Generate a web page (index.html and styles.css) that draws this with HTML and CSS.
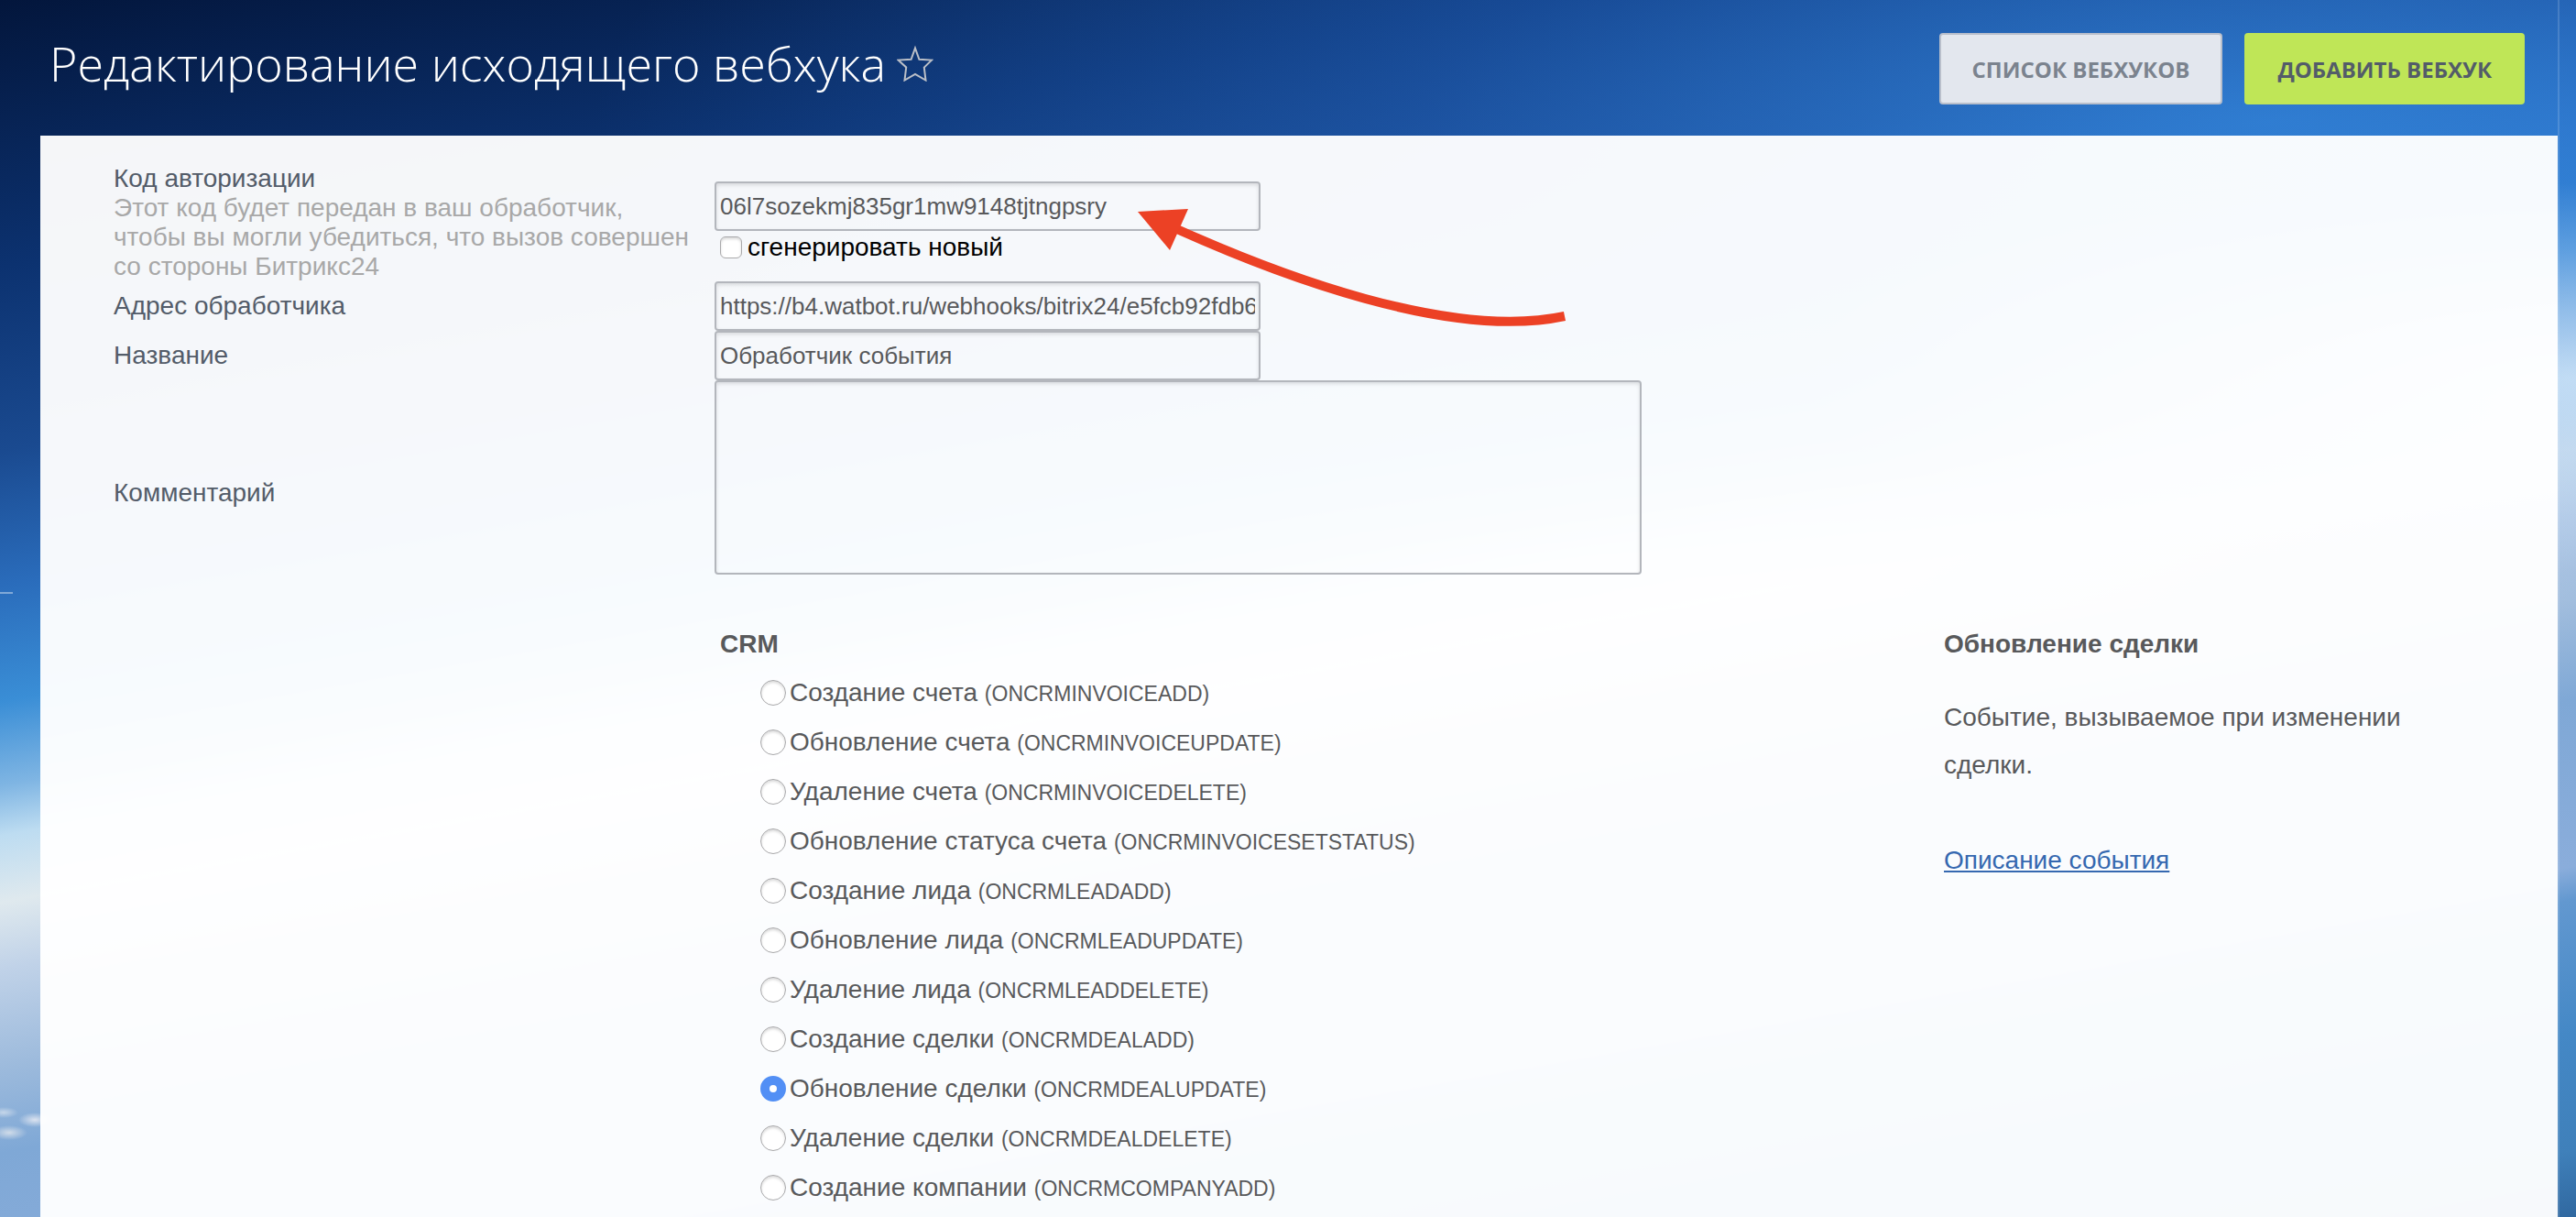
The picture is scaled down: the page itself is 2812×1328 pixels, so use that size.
FILE: index.html
```html
<!DOCTYPE html>
<html lang="ru">
<head>
<meta charset="utf-8">
<title>Редактирование исходящего вебхука</title>
<link rel="stylesheet" href="styles.css">
</head>
<body>
<span class="menu-mark"></span>
<div class="page">
  <header class="header">
    <div class="heading">
      <h1 class="title">Редактирование исходящего вебхука</h1>
      <button class="star" type="button" aria-label="Добавить в избранное">
        <svg viewBox="0 0 40 40" width="40" height="40"><path d="M20 3.500 L24.400 15.800 L38 16.600 L29.800 24.500 L31.500 38.500 L20 31.800 L8.500 38.500 L10.200 24.500 L1.500 16.600 L15.600 15.800 Z" fill="none" stroke="#bcc0c8" stroke-width="2"/></svg>
      </button>
    </div>
    <div class="actions">
      <button class="btn btn-light" type="button">СПИСОК ВЕБХУКОВ</button>
      <button class="btn btn-green" type="button">ДОБАВИТЬ ВЕБХУК</button>
    </div>
  </header>
  <main class="panel">
    <form>
      <div class="row">
        <div class="label"><label for="code">Код авторизации</label><p class="hint">Этот код будет передан в ваш обработчик,<br>чтобы вы могли убедиться, что вызов совершен<br>со стороны Битрикс24</p></div>
        <div class="control">
          <div class="code-field">
            <input class="field" id="code" type="text" value="06l7sozekmj835gr1mw9148tjtngpsry">
            <svg class="arrow" viewBox="0 0 480 140" width="480" height="140" aria-hidden="true">
              <path d="M38 22 L45 25 C150 72 340 146 466 119" fill="none" stroke="#ec4125" stroke-width="10"/>
              <path d="M0 5 L55 2 L35 47 Z" fill="#ec4125"/>
            </svg>
          </div>
          <label class="generate"><input class="check" type="checkbox">сгенерировать новый</label>
        </div>
      </div>
      <div class="row">
        <label class="label" for="url">Адрес обработчика</label>
        <input class="field" id="url" type="text" value="https://b4.watbot.ru/webhooks/bitrix24/e5fcb92fdb6">
      </div>
      <div class="row">
        <label class="label" for="name">Название</label>
        <input class="field" id="name" type="text" value="Обработчик события">
      </div>
      <div class="row">
        <label class="label" for="comment">Комментарий</label>
        <textarea class="field comment" id="comment"></textarea>
      </div>
      <div class="events">
        <fieldset class="list">
          <legend>CRM</legend>
          <label class="event"><input class="radio" type="radio" name="event"><span>Создание счета <small>(ONCRMINVOICEADD)</small></span></label>
          <label class="event"><input class="radio" type="radio" name="event"><span>Обновление счета <small>(ONCRMINVOICEUPDATE)</small></span></label>
          <label class="event"><input class="radio" type="radio" name="event"><span>Удаление счета <small>(ONCRMINVOICEDELETE)</small></span></label>
          <label class="event"><input class="radio" type="radio" name="event"><span>Обновление статуса счета <small>(ONCRMINVOICESETSTATUS)</small></span></label>
          <label class="event"><input class="radio" type="radio" name="event"><span>Создание лида <small>(ONCRMLEADADD)</small></span></label>
          <label class="event"><input class="radio" type="radio" name="event"><span>Обновление лида <small>(ONCRMLEADUPDATE)</small></span></label>
          <label class="event"><input class="radio" type="radio" name="event"><span>Удаление лида <small>(ONCRMLEADDELETE)</small></span></label>
          <label class="event"><input class="radio" type="radio" name="event"><span>Создание сделки <small>(ONCRMDEALADD)</small></span></label>
          <label class="event"><input class="radio" type="radio" name="event" checked><span>Обновление сделки <small>(ONCRMDEALUPDATE)</small></span></label>
          <label class="event"><input class="radio" type="radio" name="event"><span>Удаление сделки <small>(ONCRMDEALDELETE)</small></span></label>
          <label class="event"><input class="radio" type="radio" name="event"><span>Создание компании <small>(ONCRMCOMPANYADD)</small></span></label>
        </fieldset>
        <aside class="info">
          <h2>Обновление сделки</h2>
          <p>Событие, вызываемое при изменении сделки.</p>
          <a href="#">Описание события</a>
        </aside>
      </div>
    </form>
  </main>
</div>
</body>
</html>
```
FILE: styles.css
```css
* { box-sizing: border-box; }

body {
  margin: 0;
  min-height: 100vh;
  font-family: "Liberation Sans", Arial, sans-serif;
  font-size: 28px;
  color: #58595b;
  background:
    radial-gradient(ellipse 20px 8px at 10px 1236px, rgba(240, 240, 240, .7), transparent),
    radial-gradient(ellipse 18px 8px at 38px 1222px, rgba(240, 240, 245, .8), transparent),
    radial-gradient(ellipse 16px 6px at 4px 1214px, rgba(235, 240, 245, .6), transparent),
    radial-gradient(ellipse 30% 16% at 100% 31%, rgba(214, 234, 250, .75), transparent),
    radial-gradient(ellipse 65% 40% at 88% 10%, rgba(52, 136, 224, .75), rgba(40, 110, 205, .4) 50%, transparent),
    linear-gradient(170deg, #03163c 0%, #0c3270 16%, #1a4a90 27%, #2a6cbb 35%, #3a8ed6 42%, #7fb5e3 47%, #bddcf1 50%, #dfe9ee 54%, #c0d2e8 58%, #9cbadc 64%, #7fa8d6 69%, #8aaddb 79%, #6298d0 81%, #4488c6 89%, #3f80ba 96%, #3068a0 100%);
}

.menu-mark {
  position: absolute;
  left: 0;
  top: 646px;
  width: 14px;
  height: 2px;
  background: rgba(255, 255, 255, .4);
}

.page {
  display: flex;
  flex-direction: column;
  min-height: 100vh;
  margin-right: 18px;
  padding-left: 44px;
  border-right: 2px solid rgba(255, 255, 255, .15);
}

.header {
  display: flex;
  justify-content: space-between;
  height: 148px;
  padding: 28px 36px 0 10px;
}

.heading {
  display: flex;
  align-items: center;
  gap: 12px;
  height: 82px;
}

.title {
  margin: 0;
  font: 300 52px/80px "Open Sans", sans-serif;
  color: #fff;
}

.star {
  width: 40px;
  height: 40px;
  padding: 0;
  border: 0;
  background: none;
}

.actions {
  display: flex;
  gap: 24px;
  padding-top: 8px;
}

.btn {
  height: 78px;
  padding: 0 34px;
  border: 2px solid #b9bfcb;
  border-radius: 4px;
  font: 700 24px "Open Sans", sans-serif;
}

.btn-light { background: #e3e7ee; color: #7b838e; }
.btn-green { background: #bfe657; border-color: #bfe657; color: #535c69; }

.panel {
  flex: 1;
  padding: 31px 80px 0;
  background: rgba(255, 255, 255, .96);
}

.row {
  display: grid;
  grid-template-columns: 656px 1fr;
  align-items: center;
}

.label { line-height: 32px; color: #535c69; }
.hint { margin: 0; color: #a8a8a8; }

.field {
  display: block;
  width: 596px;
  height: 54px;
  padding: 0 4px;
  border: 2px solid #b3b6bc;
  border-radius: 4px;
  background: none;
  box-shadow: inset 0 2px 4px rgba(0, 0, 0, .12);
  font: inherit;
  font-size: 26px;
  color: #58595b;
}

.comment {
  width: 1012px;
  height: 212px;
  margin-bottom: 34px;
  resize: none;
}

.code-field { position: relative; }

.arrow {
  position: absolute;
  left: 462px;
  top: 28px;
}

.generate {
  display: flex;
  align-items: center;
  gap: 6px;
  height: 36px;
  padding-left: 6px;
  color: #000;
}

.check, .radio {
  appearance: none;
  margin: 0;
  border: 1px solid #a9a9ab;
  background: #fff;
  box-shadow: inset 0 2px 3px rgba(0, 0, 0, .15);
}

.check { width: 24px; height: 24px; border-radius: 6px; }
.radio { width: 28px; height: 28px; border-radius: 50%; }

.radio:checked {
  border: 10px solid #528ff5;
  box-shadow: none;
}

.events {
  display: grid;
  grid-template-columns: 1fr 590px;
  padding: 16px 0 0 662px;
}

.list { margin: 0; padding: 0; border: 0; }
.list legend { padding: 0; line-height: 52px; font-weight: 700; }

.event {
  display: flex;
  align-items: center;
  gap: 4px;
  height: 54px;
  padding-left: 44px;
}

.event small { font-size: 23px; }

.info { line-height: 52px; }
.info h2 { margin: 0 0 28px; font-size: inherit; }
.info p { margin: 0 0 52px; }
.info a { color: #3568b0; }
```
